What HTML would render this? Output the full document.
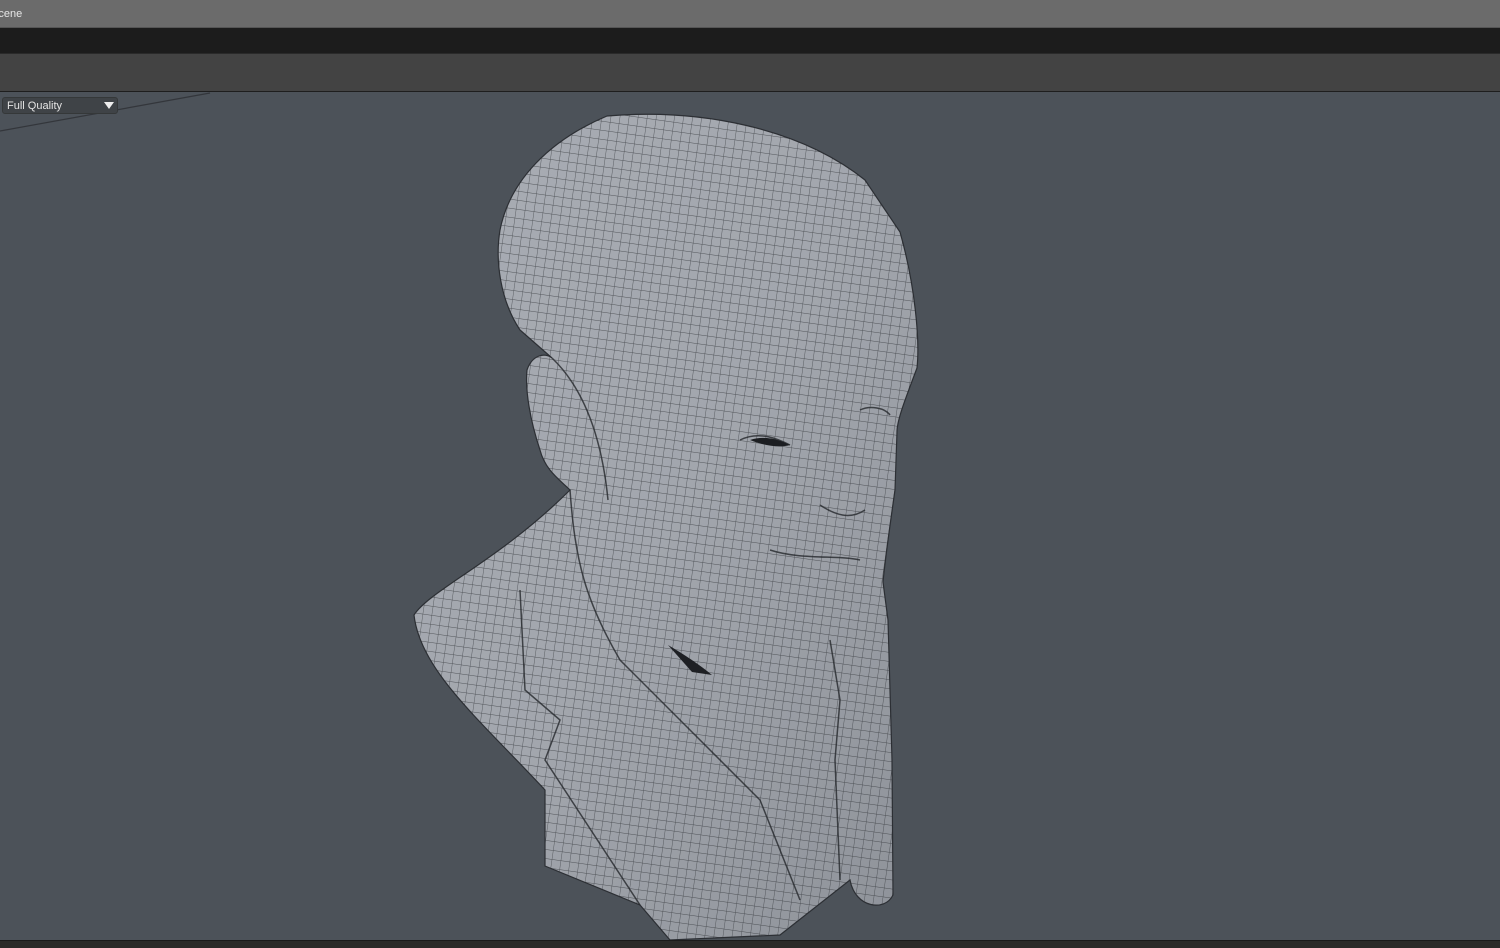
<!DOCTYPE html>
<html><head><style>
html,body{margin:0;padding:0;width:1500px;height:947px;overflow:hidden;background:#4c5259;font-family:"Liberation Sans",sans-serif}
#t{position:absolute;left:0;top:0;width:1500px;height:27px;background:#6b6b6b;border-bottom:1px solid #555}
#t span{position:absolute;left:-9px;top:8px;font-size:11px;color:#e6e6e6}
#d{position:absolute;left:0;top:28px;width:1500px;height:25px;background:#1c1c1c}
#b{position:absolute;left:0;top:53px;width:1500px;height:37px;background:#434343;border-top:1px solid #2a2a2a;border-bottom:2px solid #1e1e1e}
#v{position:absolute;left:0;top:92px;width:1500px;height:848px;background:#4c5259}
#f{position:absolute;left:0;top:940px;width:1500px;height:7px;background:#2b2a28;border-top:1px solid #1a1a1a}
#dd{position:absolute;left:2px;top:97px;width:116px;height:17px;background:#3f4347;border:1px solid #353839;border-radius:3px;font-size:11px;color:#e4e4e4;line-height:16px;box-sizing:border-box;padding-left:4px}
#dd i{position:absolute;right:3px;top:4px;width:0;height:0;border-left:5px solid transparent;border-right:5px solid transparent;border-top:7px solid #eee}
</style></head><body>
<div id="t"><span>Scene</span></div>
<div id="d"></div>
<div id="b"></div>
<div id="v"></div>
<svg style="position:absolute;left:0;top:0" width="1500" height="947">
<defs>
<pattern id="g" width="9" height="9" patternUnits="userSpaceOnUse" patternTransform="rotate(8)">
<path d="M0 0H9M0 0V9" stroke="#2e3136" stroke-width="0.9" opacity="0.7"/>
</pattern>
<linearGradient id="sh" x1="0" y1="0" x2="1" y2="1">
<stop offset="0" stop-color="#a9adb4"/><stop offset="0.5" stop-color="#a2a6ad"/><stop offset="1" stop-color="#8e9299"/>
</linearGradient>
</defs>
<line x1="0" y1="131" x2="210" y2="93" stroke="#33363b" stroke-width="1.2"/>
<g id="shape">
<path d="M607,116 C700,108 800,128 865,180 L900,232 C915,285 920,340 917,368 C905,400 897,420 897,432 L895,490 C890,525 885,560 883,582 L888,620 L892,760 L893,895 C885,912 855,908 850,880 L780,935 L670,940 L640,905 L545,866 L545,790 C480,720 420,670 414,615 C430,590 500,560 570,490 C560,480 545,470 540,450 C530,420 525,390 527,370 C532,355 545,352 552,358 L520,330 C500,300 495,260 500,230 C510,180 550,140 607,116 Z" fill="url(#sh)"/>
<path d="M607,116 C700,108 800,128 865,180 L900,232 C915,285 920,340 917,368 C905,400 897,420 897,432 L895,490 C890,525 885,560 883,582 L888,620 L892,760 L893,895 C885,912 855,908 850,880 L780,935 L670,940 L640,905 L545,866 L545,790 C480,720 420,670 414,615 C430,590 500,560 570,490 C560,480 545,470 540,450 C530,420 525,390 527,370 C532,355 545,352 552,358 L520,330 C500,300 495,260 500,230 C510,180 550,140 607,116 Z" fill="url(#g)" stroke="#2c2f34" stroke-width="1.2"/>
</g>
<g fill="none" stroke="#25282c" stroke-width="1.5" opacity="0.8">
<path d="M552,358 C575,380 600,420 608,500"/>
<path d="M570,490 C575,560 585,600 620,660 L700,740 L760,800 L800,900"/>
<path d="M520,590 L525,690 L560,720 L545,760 L640,905"/>
<path d="M830,640 L840,700 L835,760 L840,880"/>
<path d="M740,440 C760,430 780,440 790,445"/>
<path d="M860,410 C870,405 885,408 890,415"/>
<path d="M820,505 C835,515 850,520 865,510"/>
<path d="M770,550 C800,560 840,555 860,560"/>
</g>
<path d="M668,645 C685,655 700,665 712,675 L692,672 Z" fill="#1e2024"/>
<path d="M750,440 C765,435 780,440 790,445 C780,448 765,446 750,440Z" fill="#1c1e22"/>
</svg>
<div id="dd">Full Quality<i></i></div>
<div id="f"></div>
</body></html>
